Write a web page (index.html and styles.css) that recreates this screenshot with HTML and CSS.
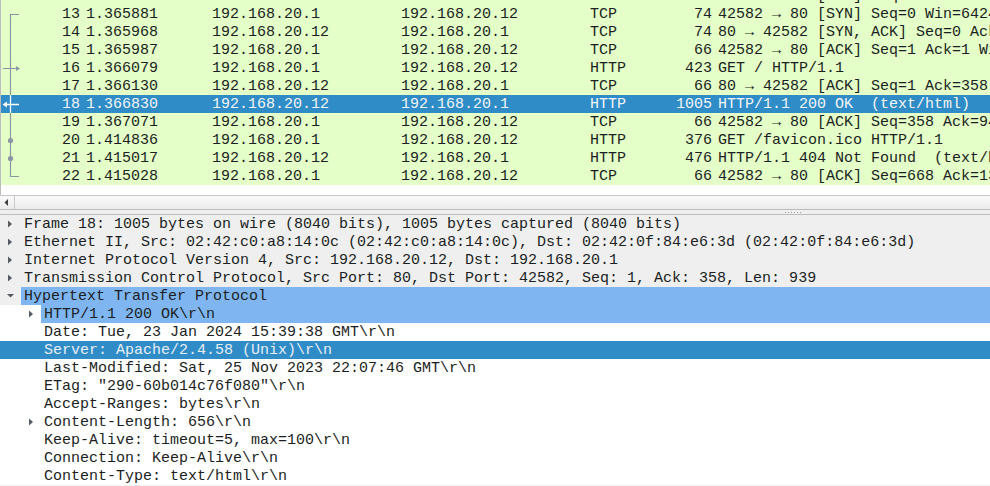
FILE: index.html
```html
<!DOCTYPE html>
<html>
<head>
<meta charset="utf-8">
<title>Wireshark</title>
<link rel="stylesheet" href="styles.css">
</head>
<body>
<div class="plist">
  <div class="rows">
    <div class="prow"><span class="rel"></span><span class="no">12</span><span class="c">1.365870</span><span class="c">192.168.20.12</span><span class="c">192.168.20.1</span><span class="c">TCP</span><span class="len">66</span><span class="info">80 → 42574 [ACK] Seq=1 Ack=2 Win=65152 Len=0</span></div>
    <div class="prow"><span class="rel"><svg width="22" height="18"><path d="M9.5 18V9.5H18" class="ln"/></svg></span><span class="no">13</span><span class="c">1.365881</span><span class="c">192.168.20.1</span><span class="c">192.168.20.12</span><span class="c">TCP</span><span class="len">74</span><span class="info">42582 → 80 [SYN] Seq=0 Win=64240 Len=0 MSS=1460 SACK_PERM</span></div>
    <div class="prow"><span class="rel"><svg width="22" height="18"><path d="M9.5 0V18" class="ln"/></svg></span><span class="no">14</span><span class="c">1.365968</span><span class="c">192.168.20.12</span><span class="c">192.168.20.1</span><span class="c">TCP</span><span class="len">74</span><span class="info">80 → 42582 [SYN, ACK] Seq=0 Ack=1 Win=65160 Len=0 MSS=1460</span></div>
    <div class="prow"><span class="rel"><svg width="22" height="18"><path d="M9.5 0V18" class="ln"/></svg></span><span class="no">15</span><span class="c">1.365987</span><span class="c">192.168.20.1</span><span class="c">192.168.20.12</span><span class="c">TCP</span><span class="len">66</span><span class="info">42582 → 80 [ACK] Seq=1 Ack=1 Win=64256 Len=0</span></div>
    <div class="prow"><span class="rel"><svg width="22" height="18"><path d="M9.5 0V18M2 9.5H16" class="ln"/><polygon points="15,7 19,9.5 15,12" class="hd"/></svg></span><span class="no">16</span><span class="c">1.366079</span><span class="c">192.168.20.1</span><span class="c">192.168.20.12</span><span class="c">HTTP</span><span class="len">423</span><span class="info">GET / HTTP/1.1</span></div>
    <div class="prow"><span class="rel"><svg width="22" height="18"><path d="M9.5 0V18" class="ln"/></svg></span><span class="no">17</span><span class="c">1.366130</span><span class="c">192.168.20.12</span><span class="c">192.168.20.1</span><span class="c">TCP</span><span class="len">66</span><span class="info">80 → 42582 [ACK] Seq=1 Ack=358 Win=64896 Len=0</span></div>
    <div class="prow sel"><span class="rel"><svg width="22" height="18"><path d="M9.5 0V18M5 9.5H18" class="lnw"/><polygon points="1.5,9.5 6,6.5 6,12.5" class="hdw"/></svg></span><span class="no">18</span><span class="c">1.366830</span><span class="c">192.168.20.12</span><span class="c">192.168.20.1</span><span class="c">HTTP</span><span class="len">1005</span><span class="info">HTTP/1.1 200 OK  (text/html)</span></div>
    <div class="prow"><span class="rel"><svg width="22" height="18"><path d="M9.5 0V18" class="ln"/></svg></span><span class="no">19</span><span class="c">1.367071</span><span class="c">192.168.20.1</span><span class="c">192.168.20.12</span><span class="c">TCP</span><span class="len">66</span><span class="info">42582 → 80 [ACK] Seq=358 Ack=940 Win=64128 Len=0</span></div>
    <div class="prow"><span class="rel"><svg width="22" height="18"><path d="M9.5 0V18" class="ln"/><circle cx="9.5" cy="9.5" r="2.6" class="hd"/></svg></span><span class="no">20</span><span class="c">1.414836</span><span class="c">192.168.20.1</span><span class="c">192.168.20.12</span><span class="c">HTTP</span><span class="len">376</span><span class="info">GET /favicon.ico HTTP/1.1</span></div>
    <div class="prow"><span class="rel"><svg width="22" height="18"><path d="M9.5 0V18" class="ln"/><circle cx="9.5" cy="9.5" r="2.6" class="hd"/></svg></span><span class="no">21</span><span class="c">1.415017</span><span class="c">192.168.20.12</span><span class="c">192.168.20.1</span><span class="c">HTTP</span><span class="len">476</span><span class="info">HTTP/1.1 404 Not Found  (text/html)</span></div>
    <div class="prow"><span class="rel"><svg width="22" height="18"><path d="M9.5 0V9.5H18" class="ln"/></svg></span><span class="no">22</span><span class="c">1.415028</span><span class="c">192.168.20.1</span><span class="c">192.168.20.12</span><span class="c">TCP</span><span class="len">66</span><span class="info">42582 → 80 [ACK] Seq=668 Ack=1350 Win=64128 Len=0</span></div>
  </div>
</div>
<div class="hscroll">
  <div class="sbtn"><svg width="14" height="13"><polygon points="8,3 4.5,6.5 8,10" class="sarrow"/></svg></div>
  <div class="strack"></div>
</div>
<div class="splitter"><span class="grip"></span></div>
<div class="details">
  <div class="drow"><span class="tw"><svg width="21" height="18"><polygon points="8,5.5 12,9 8,12.5" class="tri"/></svg></span><span class="dt">Frame 18: 1005 bytes on wire (8040 bits), 1005 bytes captured (8040 bits)</span></div>
  <div class="drow"><span class="tw"><svg width="21" height="18"><polygon points="8,5.5 12,9 8,12.5" class="tri"/></svg></span><span class="dt">Ethernet II, Src: 02:42:c0:a8:14:0c (02:42:c0:a8:14:0c), Dst: 02:42:0f:84:e6:3d (02:42:0f:84:e6:3d)</span></div>
  <div class="drow"><span class="tw"><svg width="21" height="18"><polygon points="8,5.5 12,9 8,12.5" class="tri"/></svg></span><span class="dt">Internet Protocol Version 4, Src: 192.168.20.12, Dst: 192.168.20.1</span></div>
  <div class="drow"><span class="tw"><svg width="21" height="18"><polygon points="8,5.5 12,9 8,12.5" class="tri"/></svg></span><span class="dt">Transmission Control Protocol, Src Port: 80, Dst Port: 42582, Seq: 1, Ack: 358, Len: 939</span></div>
  <div class="drow"><span class="tw"><svg width="21" height="18"><polygon points="7,7 14,7 10.5,10.5" class="tri"/></svg></span><span class="dt hl">Hypertext Transfer Protocol</span></div>
  <div class="subtree">
    <div class="drow"><span class="tw child"><svg width="21" height="18"><polygon points="9,5.5 13,9 9,12.5" class="tri"/></svg></span><span class="dt hl">HTTP/1.1 200 OK\r\n</span></div>
    <div class="drow"><span class="tw child"></span><span class="dt">Date: Tue, 23 Jan 2024 15:39:38 GMT\r\n</span></div>
    <div class="drow dsel"><span class="tw child"></span><span class="dt">Server: Apache/2.4.58 (Unix)\r\n</span></div>
    <div class="drow"><span class="tw child"></span><span class="dt">Last-Modified: Sat, 25 Nov 2023 22:07:46 GMT\r\n</span></div>
    <div class="drow"><span class="tw child"></span><span class="dt">ETag: "290-60b014c76f080"\r\n</span></div>
    <div class="drow"><span class="tw child"></span><span class="dt">Accept-Ranges: bytes\r\n</span></div>
    <div class="drow"><span class="tw child"><svg width="21" height="18"><polygon points="9,5.5 13,9 9,12.5" class="tri"/></svg></span><span class="dt">Content-Length: 656\r\n</span></div>
    <div class="drow"><span class="tw child"></span><span class="dt">Keep-Alive: timeout=5, max=100\r\n</span></div>
    <div class="drow"><span class="tw child"></span><span class="dt">Connection: Keep-Alive\r\n</span></div>
    <div class="drow"><span class="tw child"></span><span class="dt">Content-Type: text/html\r\n</span></div>
  </div>
</div>
</body>
</html>
```
FILE: styles.css
```css
html, body {
  margin: 0;
  padding: 0;
  width: 990px;
  height: 486px;
  overflow: hidden;
  background: #ffffff;
  font-family: "Liberation Mono", monospace;
  font-size: 15px;
  color: #1b1e22;
}

.plist {
  height: 195px;
  border-left: 1px solid #bcbcbc;
  background: #ffffff;
  overflow: hidden;
}

.rows {
  margin-top: -13px;
}

.prow {
  display: grid;
  grid-template-columns: 22px 60px 126px 189px 189px 60px 68px minmax(0, 1fr);
  height: 18px;
  line-height: 18px;
  background: #e4ffc7;
  white-space: pre;
}

.prow > span {
  box-sizing: border-box;
  height: 18px;
}

.prow.sel {
  background: #308cc6;
  color: #f2f6fa;
}

.rel {
  display: flex;
}

.rel svg {
  display: block;
}

.ln {
  fill: none;
  stroke: #8c96a2;
  stroke-width: 1.2;
}

.hd {
  fill: #8c96a2;
}

.lnw {
  fill: none;
  stroke: #ffffff;
  stroke-width: 1.3;
}

.hdw {
  fill: #ffffff;
}

.no {
  text-align: right;
  padding: 1px 3px 0 0;
}

.c {
  padding: 1px 0 0 3px;
  overflow: hidden;
}

.len {
  text-align: right;
  padding: 1px 3px 0 0;
}

.info {
  padding: 1px 0 0 3px;
  overflow: hidden;
}

.hscroll {
  display: flex;
  height: 13px;
  border-top: 1px solid #c6c6c6;
  border-bottom: 1px solid #bcbcbc;
  background: linear-gradient(#fafafa, #ebebeb);
}

.sbtn {
  width: 14px;
  border-right: 1px solid #cacaca;
}

.sbtn svg {
  display: block;
}

.sarrow {
  fill: #3f3f3f;
}

.strack {
  flex: 1;
}

.splitter {
  display: flex;
  align-items: center;
  height: 4px;
  background: #efefef;
  border-bottom: 1px solid #bdbdbd;
}

.grip {
  margin-left: 785px;
  width: 17px;
  height: 1px;
  background-image: repeating-linear-gradient(to right, #a2a2a2 0 1px, transparent 1px 3px);
}

.details {
  background: #efefef;
  height: 271px;
}

.drow {
  display: flex;
  height: 18px;
  line-height: 18px;
  white-space: pre;
}

.tw {
  width: 21px;
  flex: none;
}

.tw svg {
  display: block;
}

.tw.child {
  margin-left: 20px;
}

.tri {
  fill: #555a60;
}

.dt {
  flex: 1;
  box-sizing: border-box;
  height: 18px;
  padding: 1px 0 0 3px;
  overflow: hidden;
}

.dt.hl {
  background: #7fb6f1;
}

.subtree {
  background: #ffffff;
}

.drow.dsel {
  background: #308cc6;
  color: #e6edf5;
}
```
